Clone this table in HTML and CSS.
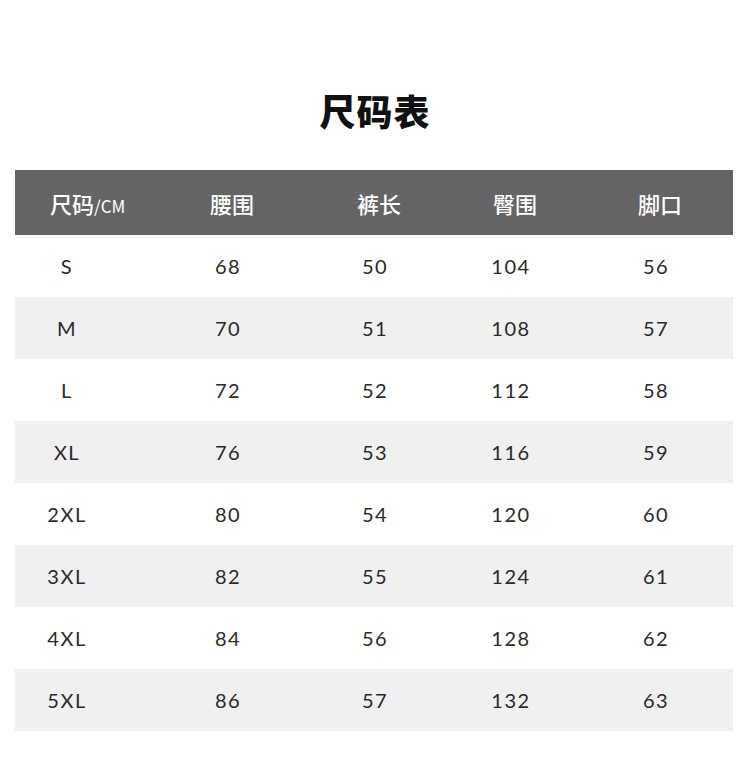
FILE: index.html
```html
<!DOCTYPE html>
<html lang="zh">
<head>
<meta charset="utf-8">
<link rel="stylesheet" href="styles.css">
</head>
<body>
<div class="page">
  <h1 class="title">尺码表</h1>
  <div class="table">
    <div class="row head">
      <div class="cell first">尺码<span class="unit">/CM</span></div>
      <div class="cell">腰围</div>
      <div class="cell">裤长</div>
      <div class="cell">臀围</div>
      <div class="cell">脚口</div>
    </div>
    <div class="row"><div class="cell">S</div><div class="cell">68</div><div class="cell">50</div><div class="cell">104</div><div class="cell">56</div></div>
    <div class="row alt"><div class="cell">M</div><div class="cell">70</div><div class="cell">51</div><div class="cell">108</div><div class="cell">57</div></div>
    <div class="row"><div class="cell">L</div><div class="cell">72</div><div class="cell">52</div><div class="cell">112</div><div class="cell">58</div></div>
    <div class="row alt"><div class="cell">XL</div><div class="cell">76</div><div class="cell">53</div><div class="cell">116</div><div class="cell">59</div></div>
    <div class="row"><div class="cell">2XL</div><div class="cell">80</div><div class="cell">54</div><div class="cell">120</div><div class="cell">60</div></div>
    <div class="row alt"><div class="cell">3XL</div><div class="cell">82</div><div class="cell">55</div><div class="cell">124</div><div class="cell">61</div></div>
    <div class="row"><div class="cell">4XL</div><div class="cell">84</div><div class="cell">56</div><div class="cell">128</div><div class="cell">62</div></div>
    <div class="row alt"><div class="cell">5XL</div><div class="cell">86</div><div class="cell">57</div><div class="cell">132</div><div class="cell">63</div></div>
  </div>
</div>
</body>
</html>
```
FILE: styles.css
```css
html, body {
  margin: 0;
  padding: 0;
  background: #ffffff;
}
.page {
  width: 750px;
  height: 767px;
  padding-top: 90px;
  box-sizing: border-box;
  font-family: "Noto Sans CJK SC", "Noto Sans", sans-serif;
}
.title {
  margin: 0;
  height: 40px;
  line-height: 40px;
  font-size: 36px;
  font-weight: 900;
  color: #111111;
  text-align: center;
  letter-spacing: 1px;
}
.table {
  margin: 40px 0 0 15px;
  width: 718px;
}
.row {
  display: grid;
  grid-template-columns: 104px 218px 76px 196px 94px;
  height: 62px;
  align-items: center;
  background: #ffffff;
}
.row.alt {
  background: #f0f0f0;
}
.row.head {
  height: 65px;
  background: #646464;
}
.cell {
  justify-self: center;
  white-space: nowrap;
  font-family: "Lato", "Noto Sans", sans-serif;
  font-size: 20px;
  color: #2a2a2a;
  letter-spacing: 1.5px;
}
.head .cell {
  font-family: "Noto Sans CJK SC", sans-serif;
  font-size: 22px;
  font-weight: 500;
  color: #ffffff;
  letter-spacing: 0;
  margin-left: 8px;
}
.head .cell.first {
  justify-self: start;
  margin-left: 35px;
}
.unit {
  font-size: 17px;
  font-weight: 400;
}
```
